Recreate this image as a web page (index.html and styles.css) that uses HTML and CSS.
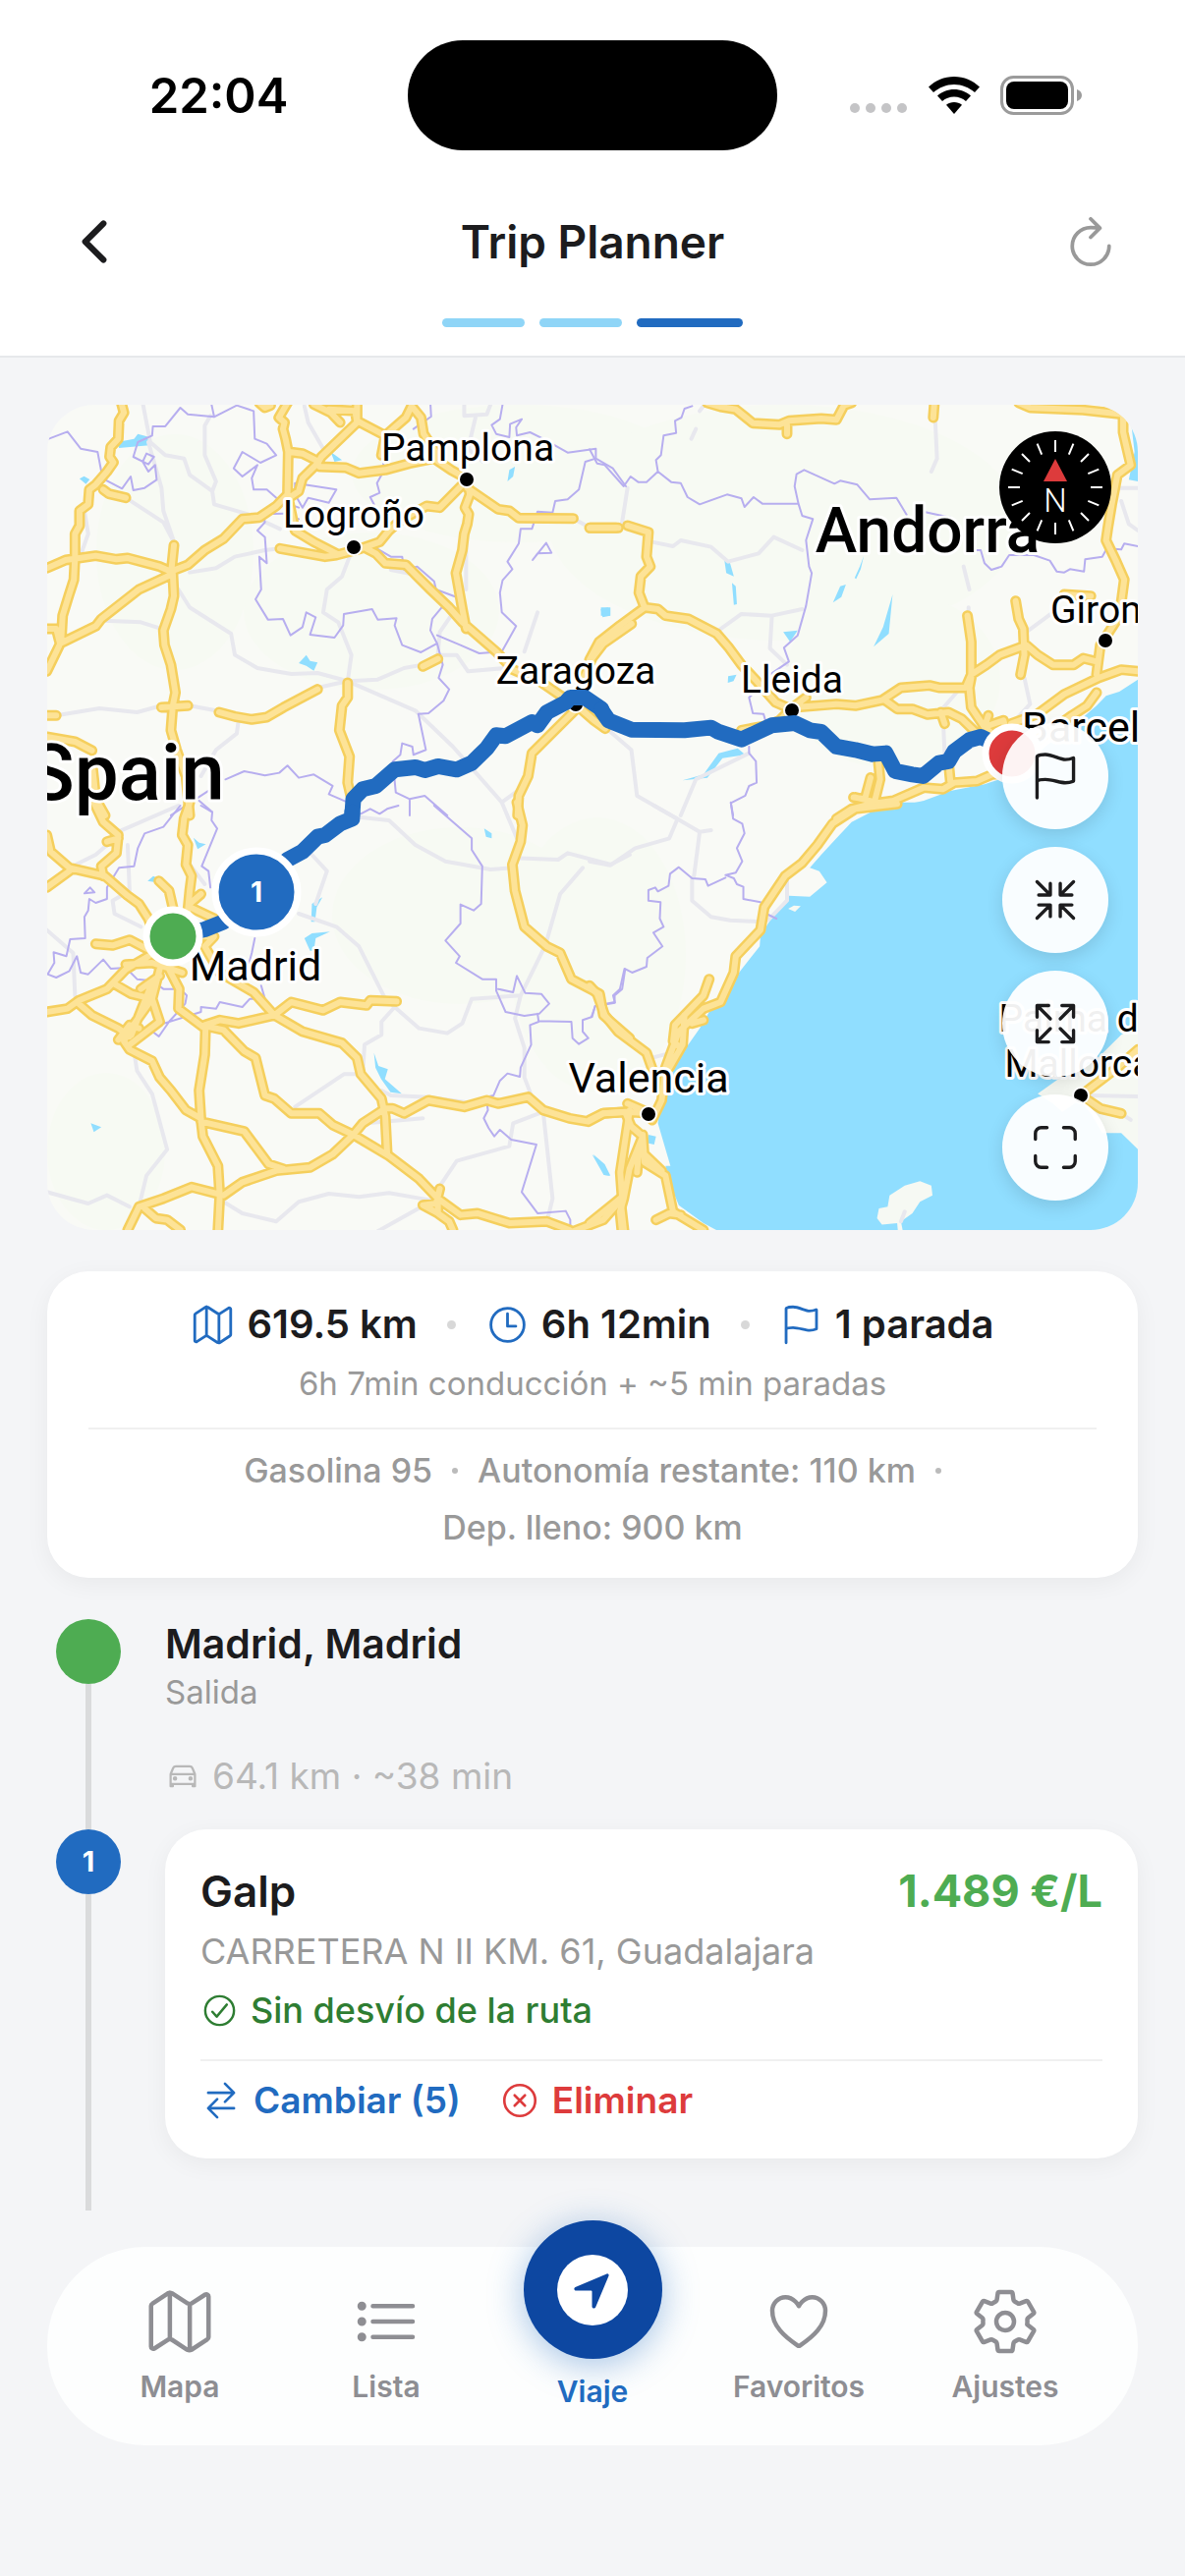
FILE: index.html
```
<!DOCTYPE html>
<html lang="es">
<head>
  <meta charset="utf-8">
  <meta name="viewport" content="width=device-width, initial-scale=1">
  <title>Trip Planner</title>
  <link rel="stylesheet" href="styles.css">
</head>
<body>
  <div class="status-bar">
    <span class="clock">22:04</span>
    <div class="island"></div>
    <div class="status-icons">
      <svg width="60" height="38" viewBox="0 0 60 38" fill="#c4c4c6"><circle cx="6" cy="32" r="5"/><circle cx="22" cy="32" r="5"/><circle cx="38" cy="32" r="5"/><circle cx="54" cy="32" r="5"/></svg>
      <svg width="52" height="38" viewBox="0 0 52 38"><path d="M26 0C16 0 7 4 0 10.500l5 5.500C11 11 18 8 26 8s15 3 21 8l5-5.500C45 4 36 0 26 0z"/><path d="M26 13c-6.500 0-12.500 2.500-17 6.500l5 5.500c3.300-2.800 7.500-4.500 12-4.500s8.700 1.700 12 4.500l5-5.500C38.500 15.500 32.500 13 26 13z"/><path d="M26 26c-3 0-5.700 1-8 2.800l8 9.200 8-9.200C31.700 27 29 26 26 26z"/></svg>
      <svg width="83" height="40" viewBox="0 0 83 40"><rect x="1.500" y="1.500" width="72" height="37" rx="12" fill="none" stroke="#9b9b9b" stroke-width="3"/><rect x="6" y="6" width="63" height="28" rx="8"/><path d="M78 14c3 1 5 3 5 6s-2 5-5 6z" fill="#9b9b9b"/></svg>
    </div>
  </div>

  <header class="header">
    <div class="title-row">
      <button class="icon-btn back" aria-label="Atrás"><svg viewBox="0 0 512 512"><path d="M328 112L184 256l144 144"/></svg></button>
      <h1>Trip Planner</h1>
      <button class="icon-btn refresh" aria-label="Actualizar"><svg viewBox="0 0 512 512"><path d="M320 146s24.360-12-64-12a160 160 0 10160 160M256 58l80 80-80 80"/></svg></button>
    </div>
    <div class="steps"><span></span><span></span><span class="active"></span></div>
  </header>

  <main class="content">
    <section class="map">
      <svg class="map-canvas" viewBox="0 0 1110 840" preserveAspectRatio="xMidYMid slice">
        <defs>
          <path id="roads-nw" d="M218 30L225 60 212 85 210 140 190 165 187 195 197 212 180 240 150 280 133 295 130 340 107 360 107 405 95 430 95 500 92 570 78 620 62 680 58 760 20 850
            M20 535L70 510 150 497 205 508 235 504 320 530 350 545 395 525 440 480 490 445 540 385 585 380 630 345 660 310 662 180 655 140 648 110 652 90 637 75 660 30
            M20 720L45 720 55 765 150 712 165 690 265 600 350 555 358 465 M355 550L358 620 350 660 330 725 333 770 350 830 362 915 355 955 350 1030 365 1090 380 1140 390 1170 400 1290
            M325 960L395 955 M20 985L45 985 M20 1050L95 1065 140 1092 M140 1130L145 1180 150 1240 175 1290
            M170 295L185 308 230 320 M585 30L600 45 615 38 M730 35L775 60 800 90 M770 50L840 55 845 90 M845 30L845 90 750 195 740 215 700 260 690 300 665 320
            M665 180L700 185 735 205 745 225 815 228 850 245 920 235 985 215 1050 200 1095 235 1138 262 M845 85L870 100 920 130 910 190
            M920 130L975 75 990 40 1015 75 1022 125 1060 190 M990 40L990 25
            M1138 265L1065 350 1030 345 960 390 930 420 905 455 855 475 790 495 760 500 640 475 M660 310L680 420 730 455 790 490
            M870 475L895 490 920 520 975 525 1005 560 1040 600 1090 655 1125 700 1215 790 1260 845 1330 880 1400 935 1428 950
            M1138 265L1145 310 1132 350 1142 370 1138 400 1130 430 1125 480 1108 550 1125 660 1135 720
            M1138 290L1220 355 1250 360 1275 382 1420 383 M1465 412L1540 412
            M478 975L520 988 565 997 605 990 650 960 740 905 M1020 835L1060 812
            M820 885L820 930 805 955 798 1030 825 1110 820 1190 830 1240
            M1428 950L1440 890 1470 810 1500 765 1575 705 M1428 965L1380 1020 1310 1100 1300 1170 1275 1230 1272 1290 M1440 965L1475 1000 1505 1025"/>
          <path id="roads-ne" d="M310 30L345 42 385 50 430 92 500 97 525 85 610 78 650 82 670 38 690 30 M520 98L520 125 M908 30L905 75
            M1130 30L1160 45 1300 52 1405 65 1425 75 M1405 70L1405 120 1425 220 1390 250 1375 340 1365 410 1360 450 1385 510 1408 570 1400 640 1390 690 1345 770 1335 860
            M0 412L70 412 M100 405L155 425 150 500 160 530 135 560 130 610 145 655 80 710 25 760 0 815
            M145 655L180 660 200 680 260 690 335 735 365 775 400 830 440 880 490 945 530 965
            M530 965L570 930 M530 965L500 1000 470 1015 400 1030 M540 960L650 950 700 955 770 938 820 900 895 893 920 900 990 900 1005 860 1045 830 1080 800 1150 770 1180 800 1220 830 1275 830 1300 810 1335 820
            M995 680L1005 760 1005 870 1000 900 1005 960 1040 1020 1090 1000 1110 1090
            M780 940L810 965 850 965 890 982 945 975 980 995 1020 1040 M925 975L935 1010
            M1122 635L1130 690 1142 720 1145 800 1135 860 M1444 850L1400 845 1340 870 1250 920 1180 980 1110 1010
            M1335 915L1310 955 1270 985 1180 1060 M1050 985L1040 1020 1100 1080
            M1110 1160L1060 1165 1020 1185 960 1190 930 1210 880 1205 800 1245 740 1255 690 1270 650 1300 M760 1120L765 1180 750 1250 M740 1175L725 1240 695 1235 M755 1250L700 1235 M945 1125L950 1185 M1250 615L1320 620"/>
          <path id="roads-sw" d="M20 90L30 140 80 190 175 215 235 275 265 300 290 345 320 440 M20 250L80 200 M145 -10L170 50 210 90 205 145 165 185 170 215 M180 110L210 100
            M400 -10L385 40 380 90 395 120 390 180 405 215 400 260 395 320 370 400 M400 300L430 270 M318 230L345 260 357 320 M400 310L465 345
            M150 422L195 427 240 410 290 440 M20 630L75 620 105 595 180 560 230 500 290 460
            M100 600L140 640 210 680 240 705 M200 545L245 575 300 590 320 500 M300 590L250 670 225 720 240 745 300 780 320 830 350 870 390 930 430 955
            M300 590L320 660 240 730 M230 485L300 480 380 510 M320 520L270 560 M345 500L372 560 370 620 440 680 M300 540L245 700 M210 715L240 670 265 680
            M440 400L465 400 440 430 480 510 570 570 625 640 M440 670L480 655 530 665 625 640 670 600 755 625 800 600 870 610 880 595 950 598
            M625 640L700 690 805 725 845 770 855 820 910 895 920 950 925 1060
            M442 680L440 760 425 870 430 960 435 1010 475 1100 480 1190 475 1300
            M450 675L490 685 545 750 575 770 600 885 625 895 670 940 745 940 780 975 835 1005 930 1070 1010 1140 1060 1200 1120 1250 1165 1245 1250 1275 1350 1270 1410 1296
            M430 965L545 995 610 1095 650 1110 M835 1005L780 1065 720 1105 630 1115 540 1150 490 1190 405 1165 330 1200 265 1225 235 1296
            M280 1230L310 1260 340 1265 375 1296 M835 1005L860 970 920 925 940 925 970 940 1035 900 1130 920 1190 900 1220 910 1300 890 1340 930 1410 955 1460 965 1500 940 1570 935
            M1065 1170L1055 1215 1020 1220 1060 1245 1090 1270 1100 1296 M1060 1200L1060 1240
            M1270 -10L1285 60 1280 110 1258 180 1265 260 1290 370 1350 430 1385 450 1415 530 1490 575 1500 640 1570 710 M1570 930L1545 1120 1550 1200 1500 1265 1420 1300 M1545 1200L1555 1300"/>
          <path id="roads-se" d="M0 550L20 575 40 640 75 690 150 755 170 820 M810 -5L700 10 640 55 600 120 560 175 515 215 460 310 450 380 385 460 380 510 345 600 300 620 235 690 200 800 190 900 165 960
            M315 530L300 580 225 670 220 720 240 740 M250 640L245 730 210 800 M270 665L300 655
            M0 960L35 940 95 935 160 940 M95 940L110 980 140 1010 105 1110 90 1200 80 1240 85 1296 M140 1005L145 1090 200 1130 220 1240 300 1296
            M140 1060L190 1115 M80 1200L0 1275 M175 1265L210 1245 240 1250 M100 910L160 940 M130 1050L125 1120"/>
          <path id="roads-island" d="M1444 745L1390 800 1350 835 1294 885 M1294 885L1345 925 1400 940"/>
        </defs>
        <rect width="1110" height="840" fill="#f9faf6"/>
        <g class="wood">
          <ellipse cx="480" cy="70" rx="170" ry="70"/><ellipse cx="330" cy="210" rx="130" ry="80"/><ellipse cx="750" cy="120" rx="240" ry="120"/>
          <ellipse cx="420" cy="520" rx="130" ry="90"/><ellipse cx="130" cy="150" rx="80" ry="120"/><ellipse cx="560" cy="560" rx="90" ry="140"/>
          <ellipse cx="60" cy="760" rx="60" ry="80"/><ellipse cx="860" cy="280" rx="110" ry="90"/>
        </g>

        <g class="water">
          <g transform="translate(552 -12) scale(.3865 .3333)"><path d="M1444 875L1395 912 1360 925 1335 955 1290 1000 1200 1080 1120 1165 1040 1195 950 1215 880 1245 760 1275 735 1300H1500V875z M1425 80L1444 120V270L1420 265 1435 180z M355 510l15 10 10 40-20-10z M375 580l10 10 3 55-8 2z M660 590l15-5-12 38-22 17z M722 498l-8 40-12 30-4-3 14-36z M798 615l-10 120-40 40 25-60z M30 655h25v25h-25z M365 865l22-5-8 20-15 5z M510 730l38-5-20 35z M340 1100l50-15 20 20-60 10-40 60-65 8 55-18z"/></g>
          <g transform="translate(552 408) scale(.3865 .3333)"><path d="M1500 -10H800L740 20 690 50 650 100 610 150 580 190 605 200 625 235 580 278 525 275 500 310 470 360 450 400 448 430 400 500 375 540 350 610 315 630 290 680 260 730 210 800 190 880 180 970 213 1100 200 1100 210 1150 235 1220 300 1275 340 1300H1500z M155 1005l20 5-5 25-20-5z M10 1065l30 30 15 35-15-2z"/></g>
          <g transform="translate(-8 -12) scale(.3827 .3333)"><path d="M207 150l45-10 10-15 32 10-2 25-80 8z M107 262l12-8 15 10-10 14z M775 180l30 25-20 5z M1250 235l15-10-5 30-15 15z M690 825l20-25 10 18 20 5-10 25-20-15z M1493 660l20-5 5 25-20 5z"/></g>
          <g transform="translate(-8 408) scale(.3827 .3333)"><path d="M410 98l15 15 18 5-22 15z M288 230l15-15 15 8-5 12z M725 300l28-20-15 30-5 45h-10z M705 405l20-15 48-5-38 20-5 38h-10z M890 755l12 40 25 10-8 30 45 45-30-5-25-40-15-35z M1183 70l20 15v15l-15-5z M137 970l28 12-20 15z M1470 1065l30 30 16 35-15-2z"/></g>
        </g>
        <g class="island-land" transform="translate(552 408) scale(.3865 .3333)"><path d="M790 1190L830 1160 870 1147 900 1160 903 1190 870 1210 850 1245 820 1270 825 1300H812L810 1275 770 1280 757 1260 762 1230 785 1225z M1500 640L1400 700 1330 780 1240 830 1180 880 1220 910 1245 935 1290 900 1320 940 1350 1000 1400 1000 1444 1050 1500 1050z M523 315l15-10 18 2-15 17z"/></g>

        <g class="minor">
          <path transform="translate(-8 -12) scale(.3827 .3333)" d="M275 30L295 150 335 190 385 200 400 250 460 300 465 340 555 370 640 415 M290 150L325 290 330 360 360 460 M230 320L330 395 360 460 M455 70L440 100 440 190 470 270 460 300 M400 548L470 535 520 500 600 480 640 475 M705 40L715 90 760 180 M120 360L130 430 110 495 M825 500L805 560 765 600 755 670 795 700 830 800 820 880 M170 695L270 700 330 722 M370 600L400 655 510 735 520 800 580 840 670 858 740 855 820 880 900 875 970 840 1020 830 M45 985L160 963 260 975 355 945 470 970 M740 900L820 880 1000 970 1100 1080 1230 1250 1290 1200 M530 1000L525 1040 470 1090 430 1170 M1130 30V70L1190 65 1200 35 M1160 75L1140 170 1180 210 M1325 670L1290 790 M1060 800L1110 800 1140 850 1240 840 M935 540L1000 555 M1135 450L1135 600 M1420 383L1465 412 M1095 680L1065 730 1060 800"/>
          <path transform="translate(552 -12) scale(.3865 .3333)" d="M280 110L268 140 M300 40L290 55 M100 290L85 400 M165 455L220 468 240 450 320 470 365 515 445 490 485 440 560 480 M340 725L400 675 480 680 560 660 M480 685L475 780 520 830 M910 80L915 200 900 240 M985 530L1000 600 M998 655V690 M1150 730L1220 670 M1145 870L1160 950 1120 1000 M930 970L935 1100 M970 910L925 970 M1380 290H1444 M1400 330L1420 400 1444 420 M50 1030L110 1090 125 1230 230 1300 M420 1100L280 1180 240 1290"/>
          <path transform="translate(-8 408) scale(.3827 .3333)" d="M210 80L370 0 M80 190L150 150 190 110 M235 120L240 260 195 290 200 330 270 370 M20 380L90 450 95 580 M400 180L440 240 M725 150L765 200 735 300 M690 330L790 370 850 430 920 590 945 615 910 660 910 700 865 730 860 820 810 820 680 920 M945 615L1010 680 1085 695 1125 665 1150 590 1280 580 1340 440 M850 35L930 45 1000 120 1080 170 1200 195 1260 190 M1230 -10L1270 100 M1260 160L1380 165 1405 145 1520 180 1570 150 M1445 190L1385 270 1345 430 M1280 580L1265 650 1290 740 1290 830 1310 890 M910 870L935 885 1035 890 1130 905 M830 1005L870 970 1020 955 M835 1010L930 1080 M250 740L260 810 300 880 340 1050 285 1130 265 1225 M20 1180L130 1215 180 1190 240 1225 M490 1210L540 1245 630 1270 690 1210 770 1185 850 1195 930 1183 1040 1205 1110 1085 1250 1040 1260 970 1340 935 1365 1200 1350 1270 M900 1300L1040 1210"/>
          <path transform="translate(552 408) scale(.3865 .3333)" d="M170 0L230 40 290 80 320 75 M230 45L210 100 120 130 55 182 0 170 M290 80L275 215 M270 220V290L320 340 370 350 455 355 M520 230L520 290 470 350 M165 770L215 755 M1310 885L1444 888 M1400 940L1425 960 M830 1240L820 1270"/>
        </g>

        <g class="border">
          <path transform="translate(-8 -12) scale(.3827 .3333)" d="M20 142L75 118 110 170 155 180 165 240 190 235 175 265 220 292 243 255 250 297 280 290 312 265 308 220 290 240 275 210 285 185 305 195 290 218 250 195 262 150 300 130 302 102 335 102 375 45 395 65 465 73 458 35 M465 73L525 38 570 55 573 140 605 155 630 190 588 213 540 180 517 230 540 255 580 220 565 260 570 295 605 295 640 330 690 350 M690 385L650 368 595 370 600 395 580 420 600 440 605 520 585 500 590 600 575 630 608 692 648 690 668 740 700 715 710 670 735 685 720 738 785 747 808 710 810 675 885 660 900 692 950 688 945 710 965 770 1015 792 1058 765 1040 725 1045 690 1070 655 1118 662 1125 630 1055 600 1050 575 1005 530 970 540 965 500 935 500 890 470 865 480 M1058 765L1073 830 1062 870 1090 905 1075 940 1035 978 1008 980 1028 1090 995 1105 992 1080 965 1070 960 1105 940 1125 948 1220 985 1240 1025 1230 1085 1290 M985 1240L985 1290 M1058 740L1120 770 1170 795 1230 790 1268 712 1230 670 1225 610 1232 572 1258 538 1245 515 1275 460 1280 415 1310 415 1325 362 1365 365 1372 330 1405 325 1435 295 1452 210 1480 200 1480 170 1405 182 1340 140 1305 120 1270 130 1268 105 1283 80 1252 95 1250 135 1215 125 1203 98 1225 80 1232 35 M1480 200L1525 230 1560 285 M680 275L790 295 770 335 715 320 700 350 680 310z M1040 30L1042 72 995 110 M915 190L915 240 898 275 905 305 880 318 890 340 M1312 510L1348 458 1362 488 1325 490z M495 1180L545 1155 600 1168 638 1160 660 1138 690 1175 730 1165 780 1200 770 1225 820 1250 M425 1245L460 1280 M350 1290L450 1215 M855 1285L880 1270 905 1285 925 1270 955 1260"/>
          <path transform="translate(552 -12) scale(.3865 .3333)" d="M270 40L250 48 242 75 225 85 228 122 195 130 188 190 175 205 180 240 150 272 128 272 108 255 90 285 40 220 20 215 0 172 M180 240L215 272 240 275 258 318 290 340 362 310 400 322 408 348 432 318 455 338 550 338 540 285 545 248 565 235 645 277 660 268 705 280 738 325 808 320 835 372 M550 338L560 375 588 385 570 450 578 530 585 550 570 650 548 740 512 778 525 820 475 860 M460 885L420 930 430 978 458 980 463 1000 M420 1080L420 1100 438 1125 440 1190 420 1200 410 1230 372 1252 378 1290 M878 362L950 380 M1010 480L1030 480 1040 520 1058 540 1085 530 1105 495 1170 495 1212 512 1230 545 1250 548 1265 538 1302 545 1305 508 1350 500 1362 475 1400 478 1408 460 1444 468"/>
          <path transform="translate(-8 408) scale(.3827 .3333)" d="M375 0L330 65 280 85 262 130 252 185 212 190 180 250 180 285 150 297 133 285 130 320 120 340 122 405 82 408 72 460 38 448 40 480 22 515 45 525 80 505 100 460 110 510 130 515 170 470 190 498 230 495 260 530 300 535 330 560 375 560 392 580 388 605 345 660 318 705 290 680 430 630 430 615 470 620 480 600 540 615 560 590 600 590 590 550 M430 0L460 20 458 45 473 70 432 185 450 200 455 250 M573 405L565 450 558 480 M120 268L135 250 147 265z M1050 0L1150 100 1150 135 1178 185 1175 300 1155 320 1120 302 1120 360 1080 412 1118 460 1108 480 1178 530 1215 530 1215 565 1240 630 1290 642 1330 635 1356 605 1335 575 1292 572 1270 520 1260 570 1220 560 M1325 635L1328 660 1305 670 1308 730 1280 800 1278 828 1245 818 1225 840 1208 885 1188 890 1193 930 1182 955 1195 985 1210 1010 1225 990 1255 1020 1322 1035 1283 1180 1325 1245 1400 1238 1412 1265V1296 M1328 658L1415 660 1418 710 1435 728 1460 710 1445 690 1445 655 1470 645 1478 612 1530 600 1530 580 1550 560 1558 500"/>
          <path transform="translate(552 408) scale(.3865 .3333)" d="M372 -10L378 40 402 55 408 85 388 130 402 170 385 205 358 212 380 222 388 240 405 248 405 285 450 295 465 305V330L492 345 M358 220L312 245 305 225 270 222 235 188 212 208 208 245 180 262 173 250 155 258 155 290 187 295 185 345 195 370 168 388 192 430 152 465 150 492 112 510 92 498 80 560 62 580 67 602 15 612 5 645"/>
        </g>

        <g class="road-case">
          <use href="#roads-nw" transform="translate(-8 -12) scale(.3827 .3333)"/>
          <use href="#roads-ne" transform="translate(552 -12) scale(.3865 .3333)"/>
          <use href="#roads-sw" transform="translate(-8 408) scale(.3827 .3333)"/>
          <use href="#roads-se" transform="translate(552 408) scale(.3865 .3333)"/>
          <use href="#roads-island" transform="translate(552 408) scale(.3865 .3333)"/>
        </g>
        <g class="road-core">
          <use href="#roads-nw" transform="translate(-8 -12) scale(.3827 .3333)"/>
          <use href="#roads-ne" transform="translate(552 -12) scale(.3865 .3333)"/>
          <use href="#roads-sw" transform="translate(-8 408) scale(.3827 .3333)"/>
          <use href="#roads-se" transform="translate(552 408) scale(.3865 .3333)"/>
          <use href="#roads-island" transform="translate(552 408) scale(.3865 .3333)"/>
        </g>

        <g class="city-dot">
          <circle cx="427" cy="76" r="7"/><circle cx="312" cy="145" r="7"/><circle cx="538" cy="305" r="7"/><circle cx="758" cy="311" r="7"/>
          <circle cx="1077" cy="240" r="7"/><circle cx="612" cy="722" r="7"/><circle cx="1052" cy="703" r="7"/>
        </g>

        <g class="place">
          <text x="428" y="57">Pamplona</text>
          <text x="312" y="125">Logroño</text>
          <text x="538" y="284">Zaragoza</text>
          <text x="758" y="293">Lleida</text>
          <text x="1078" y="222">Girona</text>
          <text class="big" x="212" y="586">Madrid</text>
          <text class="big" x="612" y="700">Valencia</text>
          <text class="big" x="1088" y="343">Barcelona</text>
          <text x="1050" y="638">Palma de</text>
          <text x="1050" y="684">Mallorca</text>
        </g>
        <g class="country">
          <text x="896" y="150" font-size="64">Andorra</text>
          <text x="80" y="402" font-size="80">Spain</text>
        </g>

        <g class="route">
          <path transform="translate(-8 -12) scale(.3827 .3333)" d="M832 1290L835 1240 860 1210 895 1200 945 1150 1000 1143 1025 1152 1060 1140 1110 1150 1150 1130 1190 1085 1215 1045 1240 1048 1310 1005 1325 1015 1350 975 1400 945 1412 930 1450 930 1495 965"/>
          <path transform="translate(552 -12) scale(.3865 .3333)" d="M31 968L50 1000 110 1028 250 1030 320 1022 340 1035 400 1058 480 1015 540 1008 580 1030 610 1035 650 1080 700 1090 745 1103 780 1100 805 1155 850 1165 878 1170 920 1130 945 1125 960 1095 1000 1060 1030 1050 1110 1095"/>
          <path transform="translate(-8 408) scale(.3827 .3333)" d="M832 20L832 40 800 55 760 90 740 95 700 140 660 165 577 265 490 355 440 378 357 400"/>
        </g>
        <g class="pins">
          <circle cx="128" cy="541" r="27" fill="#4eac52"/>
          <circle cx="213" cy="496" r="42" fill="#216bc0"/>
          <circle cx="982" cy="355" r="27" fill="#dd3b3c"/>
          <text x="213" y="506">1</text>
        </g>
      </svg>

      <div class="compass">
        <svg viewBox="0 0 114 114">
          <circle cx="57" cy="57" r="57"/>
          <path d="M57 9v12M57 93v12M9 57h12M93 57h12M38.600 12.700l4.600 11M70.800 90.300l4.600 11M12.700 38.600l11 4.600M90.300 70.800l11 4.600M75.400 12.700l-4.600 11M43.200 90.300l-4.600 11M101.300 38.600l-11 4.600M23.700 70.800l-11 4.600M23 23l8 8M83 83l8 8M91 23l-8 8M31 83l-8 8" stroke="#fff" stroke-width="2"/>
          <path d="M57 28l12 23H45z" fill="#dd3b3c"/>
          <text x="57" y="82">N</text>
        </svg>
      </div>
      <div class="map-controls">
        <button aria-label="Destino"><svg viewBox="0 0 512 512"><path d="M80 464V68.140a8 8 0 014-6.900C91.810 56.660 112.920 48 160 48c64 0 145 48 192 48a199.530 199.530 0 0077.230-15.770 2 2 0 012.770 1.850v219.360a4 4 0 01-2.390 3.650C421.370 308.700 392.330 320 352 320c-48 0-128-32-192-32s-80 16-80 16"/></svg></button>
        <button aria-label="Contraer"><svg viewBox="0 0 512 512"><path d="M304 416V304h112M314.200 314.230L432 432M208 96v112H96M197.800 197.770L80 80M416 208H304V96M314.230 197.800L432 80M96 304h112v112M197.770 314.200L80 432"/></svg></button>
        <button aria-label="Ampliar"><svg viewBox="0 0 512 512"><path d="M432 320v112H320M421.800 421.770L304 304M80 192V80h112M90.200 90.230L208 208M320 80h112v112M421.770 90.200L304 208M192 432H80V320M90.230 421.800L208 304"/></svg></button>
        <button aria-label="Pantalla completa"><svg viewBox="0 0 512 512"><path d="M336 448h56a56 56 0 0056-56v-56M448 176v-56a56 56 0 00-56-56h-56M176 448h-56a56 56 0 01-56-56v-56M64 176v-56a56 56 0 0156-56h56"/></svg></button>
      </div>
    </section>

    <section class="card summary">
      <div class="stats">
        <span class="stat"><svg viewBox="0 0 512 512"><path d="M313.270 124.640L198.730 51.360a32 32 0 00-29.280.35L56.510 127.490A16 16 0 0048 141.630v295.800a16 16 0 0023.490 14.140l97.820-63.790a32 32 0 0129.500-.24l111.860 73a32 32 0 0029.270-.11l115.430-75.940a16 16 0 008.630-14.200V74.570a16 16 0 00-23.490-14.140l-98 63.860a32 32 0 01-29.240.35zM328 128v336M184 384V48"/></svg>619.5 km</span>
        <i class="sep"></i>
        <span class="stat"><svg viewBox="0 0 512 512"><path d="M256 64C150 64 64 150 64 256s86 192 192 192 192-86 192-192S362 64 256 64zM256 128v144h96"/></svg>6h 12min</span>
        <i class="sep"></i>
        <span class="stat"><svg viewBox="0 0 512 512"><path d="M80 464V68.140a8 8 0 014-6.900C91.810 56.660 112.920 48 160 48c64 0 145 48 192 48a199.530 199.530 0 0077.230-15.770 2 2 0 012.770 1.850v219.360a4 4 0 01-2.390 3.650C421.370 308.700 392.330 320 352 320c-48 0-128-32-192-32s-80 16-80 16"/></svg>1 parada</span>
      </div>
      <p class="breakdown">6h 7min conducción + ~5 min paradas</p>
      <div class="fuel">
        <span>Gasolina 95</span><i class="sep small"></i><span>Autonomía restante: 110 km</span><i class="sep small"></i><span>Dep. lleno: 900 km</span>
      </div>
    </section>

    <ol class="timeline">
      <li>
        <div class="rail"><span class="node start"></span></div>
        <div class="stop">
          <h2>Madrid, Madrid</h2>
          <p class="role">Salida</p>
          <p class="leg"><svg viewBox="0 0 512 512"><path d="M80 224l37.780-88.150C123.930 121.500 139.600 112 157.110 112h197.780c17.510 0 33.180 9.500 39.330 23.850L432 224M80 224h352v144H80zM112 368v32H80v-32M432 368v32h-32v-32"/><circle cx="144" cy="288" r="16"/><circle cx="368" cy="288" r="16"/></svg>64.1 km · ~38 min</p>
        </div>
      </li>
      <li>
        <div class="rail"><span class="node">1</span></div>
        <article class="card station">
          <div class="station-top">
            <h2>Galp</h2>
            <strong class="price">1.489 €/L</strong>
          </div>
          <p class="address">CARRETERA N II KM. 61, Guadalajara</p>
          <p class="detour"><svg viewBox="0 0 512 512"><path d="M448 256c0-106-86-192-192-192S64 150 64 256s86 192 192 192 192-86 192-192zM352 176L217.600 336 160 272"/></svg>Sin desvío de la ruta</p>
          <div class="actions">
            <button class="change"><svg viewBox="0 0 512 512"><path d="M304 48l112 112-112 112M398.870 160H96M208 464L96 352l112-112M114 352h302"/></svg>Cambiar (5)</button>
            <button class="remove"><svg viewBox="0 0 512 512"><path d="M448 256c0-106-86-192-192-192S64 150 64 256s86 192 192 192 192-86 192-192zM320 320L192 192M192 320l128-128"/></svg>Eliminar</button>
          </div>
        </article>
      </li>
    </ol>
  </main>

  <nav class="tabbar">
    <a href="#mapa"><svg viewBox="0 0 512 512"><path d="M313.270 124.640L198.730 51.360a32 32 0 00-29.280.35L56.510 127.490A16 16 0 0048 141.630v295.800a16 16 0 0023.490 14.140l97.820-63.790a32 32 0 0129.500-.24l111.860 73a32 32 0 0029.270-.11l115.430-75.940a16 16 0 008.630-14.200V74.570a16 16 0 00-23.490-14.140l-98 63.860a32 32 0 01-29.240.35zM328 128v336M184 384V48"/></svg>Mapa</a>
    <a href="#lista"><svg viewBox="0 0 512 512"><path d="M160 144h288M160 256h288M160 368h288"/><g class="bullets"><circle cx="80" cy="144" r="16"/><circle cx="80" cy="256" r="16"/><circle cx="80" cy="368" r="16"/></g></svg>Lista</a>
    <a href="#viaje" class="current">
      <span class="fab"><svg viewBox="0 0 72 72"><circle cx="36" cy="36" r="36" fill="#fff"/><path d="M50.500 19.500L18.500 33c-1.800.8-1.300 3.500.6 3.500h15.400a1 1 0 011 1v15.200c0 2 2.800 2.500 3.600.7l13.400-32c.6-1.200-.8-2.500-2-1.900z" fill="#0d47a1"/></svg></span>Viaje</a>
    <a href="#favoritos"><svg viewBox="0 0 512 512"><path d="M352.920 80C288 80 256 144 256 144s-32-64-96.920-64c-52.760 0-94.540 44.140-95.080 96.810-1.100 109.330 86.730 187.080 183 252.420a16 16 0 0018 0c96.260-65.340 184.090-143.090 183-252.420-.54-52.670-42.320-96.810-95.080-96.810z"/></svg>Favoritos</a>
    <a href="#ajustes"><svg viewBox="0 0 512 512"><circle cx="256" cy="256" r="64"/><path d="M416.390 256a154.340 154.340 0 01-1.530 20.790l45.210 35.460a10.810 10.810 0 012.450 13.750l-42.770 74a10.810 10.810 0 01-13.140 4.590l-44.900-18.080a16.110 16.110 0 00-15.170 1.750A164.480 164.480 0 01325 400.800a15.940 15.940 0 00-8.820 12.140l-6.730 47.890a11.080 11.080 0 01-10.680 9.170h-85.540a11.110 11.110 0 01-10.690-8.870l-6.720-47.820a16.070 16.070 0 00-9-12.220 155.300 155.300 0 01-21.460-12.570 16 16 0 00-15.110-1.710l-44.890 18.070a10.810 10.810 0 01-13.140-4.580l-42.770-74a10.800 10.800 0 012.450-13.750l38.210-30a16.050 16.050 0 006-14.080c-.36-4.170-.58-8.330-.58-12.500s.21-8.270.58-12.350a16 16 0 00-6.070-13.940l-38.190-30A10.810 10.810 0 0149.480 186l42.770-74a10.810 10.810 0 0113.140-4.590l44.900 18.080a16.110 16.110 0 0015.170-1.750A164.480 164.480 0 01187 111.200a15.940 15.940 0 008.820-12.140l6.730-47.890A11.080 11.080 0 01213.230 42h85.540a11.110 11.110 0 0110.690 8.870l6.720 47.820a16.070 16.070 0 009 12.220 155.300 155.300 0 0121.460 12.570 16 16 0 0015.110 1.710l44.890-18.070a10.810 10.810 0 0113.140 4.580l42.770 74a10.800 10.800 0 01-2.450 13.750l-38.210 30a16.050 16.050 0 00-6.050 14.080c.33 4.140.55 8.300.55 12.470z"/></svg>Ajustes</a>
  </nav>
</body>
</html>
```
FILE: styles.css
```
* {
  box-sizing: border-box;
  margin: 0;
  padding: 0;
}
body {
  min-height: 100vh;
  display: flex;
  flex-direction: column;
  background: #f4f5f7;
  color: #1c1c1e;
  font-family: Inter, "Liberation Sans", sans-serif;
}
button {
  border: 0;
  background: none;
  font: inherit;
  color: inherit;
  cursor: pointer;
}
svg {
  display: block;
  flex: none;
}

/* status bar */
.status-bar {
  display: grid;
  grid-template-columns: 1fr 376px 1fr;
  align-items: center;
  padding: 41px 0 24px;
  background: #fff;
  color: #000;
}
.clock {
  padding-left: 30px;
  text-align: center;
  font-size: 49px;
  font-weight: 600;
}
.island {
  height: 112px;
  border-radius: 56px;
  background: #000;
}
.status-icons {
  display: flex;
  justify-content: center;
  align-items: center;
  gap: 21px;
  padding-right: 32px;
}

/* header */
.header {
  padding: 36px 60px 29px;
  background: #fff;
  border-bottom: 2px solid #e6e8eb;
}
.title-row {
  display: flex;
  justify-content: space-between;
  align-items: center;
}
.title-row h1 {
  font-size: 46px;
  font-weight: 600;
  line-height: 66px;
}
.icon-btn svg,
.map-controls svg,
.stat svg,
.leg svg,
.detour svg,
.actions svg,
.tabbar a > svg {
  fill: none;
  stroke: currentColor;
  stroke-width: 32;
  stroke-linecap: round;
  stroke-linejoin: round;
}
.icon-btn {
  width: 72px;
  display: flex;
  justify-content: center;
}
.icon-btn.back svg {
  width: 66px;
  height: 66px;
  stroke-width: 48;
}
.refresh {
  color: #999;
}
.refresh svg {
  width: 60px;
  height: 60px;
}
.steps {
  display: flex;
  justify-content: center;
  gap: 15px;
  margin-top: 45px;
}
.steps span {
  width: 84px;
  height: 9px;
  border-radius: 5px;
  background: #8fd5f7;
}
.steps .active {
  width: 108px;
  background: #216bc0;
}

.content {
  flex: 1;
  padding: 48px 48px 0;
}

/* map */
.map {
  position: relative;
  aspect-ratio: 1110 / 840;
  border-radius: 48px;
  overflow: hidden;
}
.map-canvas {
  width: 100%;
  height: 100%;
  font-family: Roboto, "Liberation Sans", sans-serif;
}
.map-canvas path {
  vector-effect: non-scaling-stroke;
}
.wood {
  fill: #f7faf3;
}
.water {
  fill: #90deff;
}
.island-land {
  fill: #f6f9f3;
}
.minor,
.border,
.road-case,
.road-core,
.route {
  fill: none;
  stroke-linecap: round;
  stroke-linejoin: round;
}
.minor {
  stroke: #e8e8ee;
  stroke-width: 4;
}
.border {
  stroke: #b7aeef;
  stroke-width: 2;
}
.road-case {
  stroke: #f5cf5d;
  stroke-width: 11;
}
.road-core {
  stroke: #fde397;
  stroke-width: 6;
}
.route {
  stroke: #216bc0;
  stroke-width: 16;
}
.city-dot circle {
  stroke: #fff;
  stroke-width: 4;
  paint-order: stroke;
}
.place text,
.country text {
  text-anchor: middle;
  stroke: #fff;
  stroke-width: 6;
  stroke-linejoin: round;
  paint-order: stroke;
}
.place {
  font-size: 39px;
}
.place .big {
  font-size: 43px;
}
.country {
  font-weight: 500;
}
.pins circle {
  stroke: #fff;
  stroke-width: 7;
}
.pins text {
  fill: #fff;
  font: 700 28px Inter, sans-serif;
  text-anchor: middle;
}
.compass {
  position: absolute;
  top: 27px;
  right: 27px;
  width: 114px;
}
.compass text {
  fill: #fff;
  font: 300 33px Roboto, sans-serif;
  text-anchor: middle;
}
.map-controls {
  position: absolute;
  right: 30px;
  bottom: 30px;
  display: flex;
  flex-direction: column;
  gap: 18px;
}
.map-controls button {
  width: 108px;
  height: 108px;
  display: flex;
  align-items: center;
  justify-content: center;
  border-radius: 50%;
  background: rgba(255, 255, 255, .94);
  box-shadow: 0 6px 18px rgba(0, 0, 0, .12);
}
.map-controls svg {
  width: 54px;
  height: 54px;
}

/* cards */
.card {
  background: #fff;
  border-radius: 42px;
  box-shadow: 0 6px 24px rgba(0, 0, 0, .05);
}
.summary {
  margin-top: 42px;
  padding: 30px 42px;
  text-align: center;
}
.stats {
  display: flex;
  justify-content: center;
  align-items: center;
  gap: 30px;
  font-size: 40px;
  font-weight: 600;
  line-height: 48px;
}
.stat {
  display: flex;
  align-items: center;
  gap: 12px;
}
.stat svg {
  width: 45px;
  height: 45px;
  color: #216bc0;
}
.sep {
  width: 9px;
  height: 9px;
  border-radius: 50%;
  background: #d8d8d8;
}
.sep.small {
  width: 6px;
  height: 6px;
  background: #bbb;
}
.breakdown {
  margin-top: 15px;
  color: #999;
  font-size: 33px;
  line-height: 42px;
}
.fuel {
  display: flex;
  flex-wrap: wrap;
  justify-content: center;
  align-items: center;
  gap: 16px 20px;
  margin-top: 24px;
  padding: 21px 100px 0;
  border-top: 2px solid #f0f0f0;
  color: #999;
  font-size: 34px;
  font-weight: 500;
  line-height: 42px;
}

/* timeline */
.timeline {
  margin-top: 42px;
  padding-left: 9px;
  list-style: none;
}
.timeline li {
  display: flex;
  gap: 45px;
}
.rail {
  flex: none;
  display: flex;
  flex-direction: column;
  align-items: center;
}
.rail::after {
  content: "";
  flex: 1;
  width: 6px;
  background: #dadbdc;
}
.node {
  width: 66px;
  height: 66px;
  border-radius: 50%;
  background: #216bc0;
  color: #fff;
  font-size: 29px;
  font-weight: 700;
  line-height: 66px;
  text-align: center;
}
.node.start {
  background: #4eac52;
}
.stop {
  padding-bottom: 30px;
}
.stop h2 {
  font-size: 41px;
  font-weight: 600;
  line-height: 50px;
}
.role {
  color: #999;
  font-size: 33px;
  line-height: 48px;
}
.leg {
  display: flex;
  align-items: center;
  gap: 12px;
  margin-top: 38px;
  color: #b8b8b8;
  font-size: 37px;
  line-height: 48px;
}
.leg svg {
  width: 36px;
  height: 36px;
}
.station {
  flex: 1;
  margin-bottom: 53px;
  padding: 36px 36px 35px;
}
.station-top {
  display: flex;
  justify-content: space-between;
  line-height: 54px;
}
.station h2 {
  font-size: 44px;
  font-weight: 600;
}
.price {
  color: #4eac52;
  font-size: 45px;
  font-weight: 700;
}
.address {
  margin-top: 10px;
  color: #999;
  font-size: 36px;
  line-height: 48px;
}
.detour {
  display: flex;
  align-items: center;
  gap: 12px;
  margin-top: 12px;
  color: #2e7d32;
  font-size: 36px;
  font-weight: 500;
  line-height: 48px;
}
.detour svg {
  width: 39px;
  height: 39px;
}
.actions {
  display: flex;
  gap: 39px;
  margin-top: 26px;
  padding-top: 16px;
  border-top: 2px solid #f0f0f0;
  font-size: 37px;
  font-weight: 600;
  line-height: 48px;
}
.actions button {
  display: flex;
  align-items: center;
  gap: 12px;
}
.actions svg {
  width: 42px;
  height: 42px;
}
.change {
  color: #216bc0;
}
.remove {
  color: #dd3b3c;
}

/* bottom tabs */
.tabbar {
  display: grid;
  grid-template-columns: repeat(5, 1fr);
  margin: 37px 48px 133px;
  padding: 40px 30px 35px;
  border-radius: 100px;
  background: #fdfefe;
}
.tabbar a {
  display: flex;
  flex-direction: column;
  align-items: center;
  gap: 10px;
  color: #8e8e93;
  font-size: 30px;
  font-weight: 600;
  line-height: 40px;
  text-decoration: none;
}
.tabbar a > svg {
  width: 72px;
  height: 72px;
}
.bullets {
  fill: currentColor;
}
.tabbar .current {
  gap: 13px;
  color: #216bc0;
}
.fab {
  width: 141px;
  height: 141px;
  display: flex;
  align-items: center;
  justify-content: center;
  margin-top: -67px;
  border-radius: 50%;
  background: #0d47a1;
  box-shadow: 0 6px 36px rgba(33, 107, 192, .4);
}
.fab svg {
  width: 72px;
}
```
